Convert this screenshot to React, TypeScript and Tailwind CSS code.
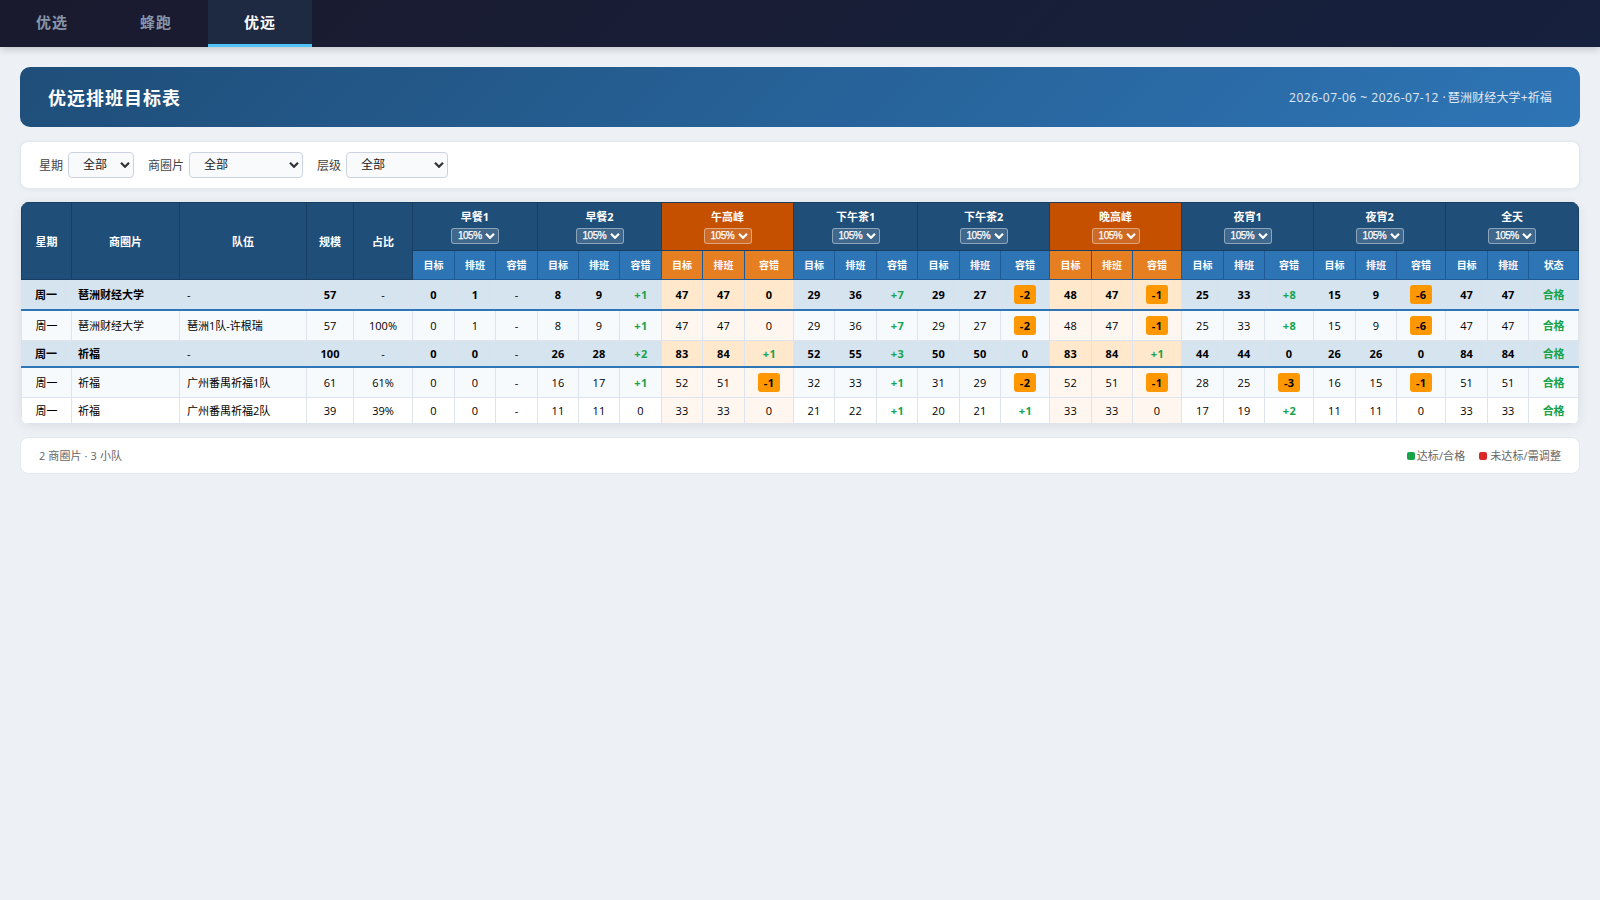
import React from "react";

type Group = { name: string; hot?: boolean; last: string };

const groups: Group[] = [
  { name: "早餐1", last: "容错" },
  { name: "早餐2", last: "容错" },
  { name: "午高峰", hot: true, last: "容错" },
  { name: "下午茶1", last: "容错" },
  { name: "下午茶2", last: "容错" },
  { name: "晚高峰", hot: true, last: "容错" },
  { name: "夜宵1", last: "容错" },
  { name: "夜宵2", last: "容错" },
  { name: "全天", last: "状态" },
];

const widths = [
  51, 108, 127, 47, 59, 42, 41, 42, 41, 41, 42, 41, 42, 49, 41, 42, 41, 42, 41, 49, 42, 41, 49, 42, 41, 49, 42, 41, 49,
  42, 41, 50,
];

type Row = { total?: boolean; zebra?: boolean; height: string; head: string[]; cells: string[] };

const rows: Row[] = [
  {
    total: true,
    height: "h-[31px]",
    head: ["周一", "琶洲财经大学", "-", "57", "-"],
    cells: "0 1 - 8 9 +1 47 47 0 29 36 +7 29 27 -2 48 47 -1 25 33 +8 15 9 -6 47 47 合格".split(" "),
  },
  {
    zebra: true,
    height: "h-[30px]",
    head: ["周一", "琶洲财经大学", "琶洲1队-许根瑞", "57", "100%"],
    cells: "0 1 - 8 9 +1 47 47 0 29 36 +7 29 27 -2 48 47 -1 25 33 +8 15 9 -6 47 47 合格".split(" "),
  },
  {
    total: true,
    height: "h-[27px]",
    head: ["周一", "祈福", "-", "100", "-"],
    cells: "0 0 - 26 28 +2 83 84 +1 52 55 +3 50 50 0 83 84 +1 44 44 0 26 26 0 84 84 合格".split(" "),
  },
  {
    zebra: true,
    height: "h-[30px]",
    head: ["周一", "祈福", "广州番禺祈福1队", "61", "61%"],
    cells: "0 0 - 16 17 +1 52 51 -1 32 33 +1 31 29 -2 52 51 -1 28 25 -3 16 15 -1 51 51 合格".split(" "),
  },
  {
    height: "h-[26px]",
    head: ["周一", "祈福", "广州番禺祈福2队", "39", "39%"],
    cells: "0 0 - 11 11 0 33 33 0 21 22 +1 20 21 +1 33 33 0 17 19 +2 11 11 0 33 33 合格".split(" "),
  },
];

function Chevron({ className }: { className: string }) {
  return (
    <svg viewBox="0 0 10 6" className={className} fill="none" stroke="currentColor" strokeWidth="2.2">
      <path d="M1 .8l4 4 4-4" />
    </svg>
  );
}

function Filter({ label, width }: { label: string; width: string }) {
  return (
    <div className="flex items-center gap-[5px]">
      <span className="pt-[2px] text-[12px] text-[#444]">{label}</span>
      <div
        className={`flex h-[26px] items-center justify-between rounded-[4px] border border-[#ccd3e0] bg-[#f9fafc] pr-[3px] pl-[14px] text-[12px] text-[#222] ${width}`}
      >
        <span>全部</span>
        <Chevron className="h-[6px] w-[10px] text-[#333]" />
      </div>
    </div>
  );
}

function Value({ text }: { text: string }) {
  if (/^-\d/.test(text))
    return (
      <span className="mx-auto flex h-[19px] w-[22px] items-center justify-center rounded-[3px] bg-[#ff9800] font-bold tracking-[0.3px] text-black">
        {text}
      </span>
    );
  if (text === "合格") return <span className="font-bold text-[#16a34a]">{text}</span>;
  if (text.startsWith("+")) return <span className="pl-px font-bold tracking-[0.6px] text-[#16a34a]">{text}</span>;
  return <span className={text === "-" ? "font-normal" : "tracking-[0.2px]"}>{text}</span>;
}

function cellColor(row: Row, hot: boolean) {
  if (row.total) return hot ? "bg-[#ffe8cc]" : "bg-[#d6e4f0]";
  if (hot) return "bg-[#fff7ef]";
  return row.zebra ? "bg-[#f7fafd]" : "bg-white";
}

export default function App() {
  return (
    <div className="min-h-screen bg-[#edf1f6] font-['Open_Sans','Noto_Sans_CJK_SC',sans-serif] text-black">
      <nav className="flex h-[47px] bg-[linear-gradient(135deg,#1a1a2e,#16213e)] text-[15px] leading-[22px] font-semibold tracking-[1px] shadow-[0_2px_8px_rgba(0,0,0,0.2)]">
        <div className="w-[104px] pt-[11px] text-center text-[#8795a9]">优选</div>
        <div className="w-[104px] pt-[11px] text-center text-[#8795a9]">蜂跑</div>
        <div className="w-[104px] border-b-[3px] border-[#4fc3f7] bg-[#1e2942] pt-[11px] text-center font-bold text-white">
          优远
        </div>
      </nav>

      <main className="px-[20px] pt-[20px]">
        <header className="flex h-[60px] items-center justify-between rounded-[10px] bg-[linear-gradient(135deg,#1f4e79,#2e75b6)] px-[28px] text-white">
          <h1 className="pt-[2px] text-[18px] font-bold tracking-[1px]">优远排班目标表</h1>
          <span className="pt-[2px] text-[12px] text-white/85">
            <span className="tracking-[0.5px]">2026-07-06 ~ 2026-07-12 · </span>
            <span className="-ml-[2px] tracking-[0.15px]">琶洲财经大学+祈福</span>
          </span>
        </header>

        <section className="mt-[14px] flex h-[48px] items-center gap-[14px] rounded-[8px] border border-[#e2e8f0] bg-white px-[18px] shadow-[0_1px_4px_rgba(0,0,0,0.05)]">
          <Filter label="星期" width="w-[66px]" />
          <Filter label="商圈片" width="w-[114px]" />
          <Filter label="层级" width="w-[102px]" />
        </section>

        <div className="mt-[13px] ml-px w-[1558px] overflow-hidden rounded-[8px] shadow-[0_2px_12px_rgba(0,0,0,0.08)]">
          <table className="w-[1558px] table-fixed border-separate border-spacing-0 text-center text-[11px] leading-[15px]">
            <colgroup>
              {widths.map((w, i) => (
                <col key={i} style={{ width: w }} />
              ))}
            </colgroup>
            <thead className="font-bold text-white">
              <tr className="h-[49px]">
                {["星期", "商圈片", "队伍", "规模", "占比"].map((h, i) => (
                  <th
                    key={h}
                    rowSpan={2}
                    className={`border-y border-r border-[#173f63] bg-[#1f4e79] p-0 pt-px ${i === 0 ? "border-l" : ""}`}
                  >
                    {h}
                  </th>
                ))}
                {groups.map((g) => (
                  <th
                    key={g.name}
                    colSpan={3}
                    className={`border-y border-r border-[#173f63] p-0 ${g.hot ? "bg-[#c55000]" : "bg-[#1f4e79]"}`}
                  >
                    <div className="flex flex-col items-center gap-[4px] pb-px">
                      <span className="-mb-px">{g.name}</span>
                      <div className="mt-px -mb-px flex h-[16px] w-[48px] items-center justify-between rounded-[3px] border border-white/40 bg-white/15 pr-[3px] pl-[6px] font-['Liberation_Sans',sans-serif] text-[10px] leading-none font-normal">
                        <span className="tracking-[-0.5px] [-webkit-text-stroke:0.25px_white]">105%</span>
                        <Chevron className="h-[6px] w-[10px]" />
                      </div>
                    </div>
                  </th>
                ))}
              </tr>
              <tr className="h-[29px] text-[10px]">
                {groups.flatMap((g) =>
                  ["目标", "排班", g.last].map((s) => (
                    <th
                      key={g.name + s}
                      className={`border-r border-b border-[#1f5a96] p-0 pt-px ${g.hot ? "bg-[#e67e22]" : "bg-[#2e75b6]"}`}
                    >
                      {s}
                    </th>
                  )),
                )}
              </tr>
            </thead>
            <tbody>
              {rows.map((row, r) => {
                const line = row.total
                  ? "border-b-2 border-b-[#2e75b6] pr-px font-bold shadow-[inset_-1px_0_0_#dbe4ee]"
                  : "border-r border-b border-[#dde4ed]";
                const edge = row.total ? "" : "border-l";
                return (
                  <tr key={r} className={row.height}>
                    {row.head.map((t, i) => (
                      <td
                        key={i}
                        className={`py-0 ${line} ${cellColor(row, false)} ${i === 0 ? edge : ""} ${
                          i === 1 ? "pl-[6px] text-left" : i === 2 ? "pl-[7px] text-left" : "pl-0"
                        }`}
                      >
                        <span className={t === "-" ? "font-normal" : ""}>{t}</span>
                      </td>
                    ))}
                    {row.cells.map((t, i) => (
                      <td key={i} className={`py-0 pl-0 ${line} ${cellColor(row, !!groups[Math.floor(i / 3)].hot)}`}>
                        <Value text={t} />
                      </td>
                    ))}
                  </tr>
                );
              })}
            </tbody>
          </table>
        </div>

        <footer className="mt-[13px] flex h-[37px] items-center justify-between rounded-[8px] border border-[#e2e8f0] bg-white px-[18px] pt-px text-[11px] text-[#666]">
          <span className="tracking-[0.1px]">2 商圈片 · 3 小队</span>
          <div className="flex items-center gap-[14px] tracking-[0.1px]">
            <span className="flex items-center gap-[2px]">
              <i className="h-[8px] w-[8px] rounded-[2px] bg-[#16a34a]" />
              达标/合格
            </span>
            <span className="flex items-center gap-[3px]">
              <i className="h-[8px] w-[8px] rounded-[2px] bg-[#dc2626]" />
              未达标/需调整
            </span>
          </div>
        </footer>
      </main>
    </div>
  );
}
